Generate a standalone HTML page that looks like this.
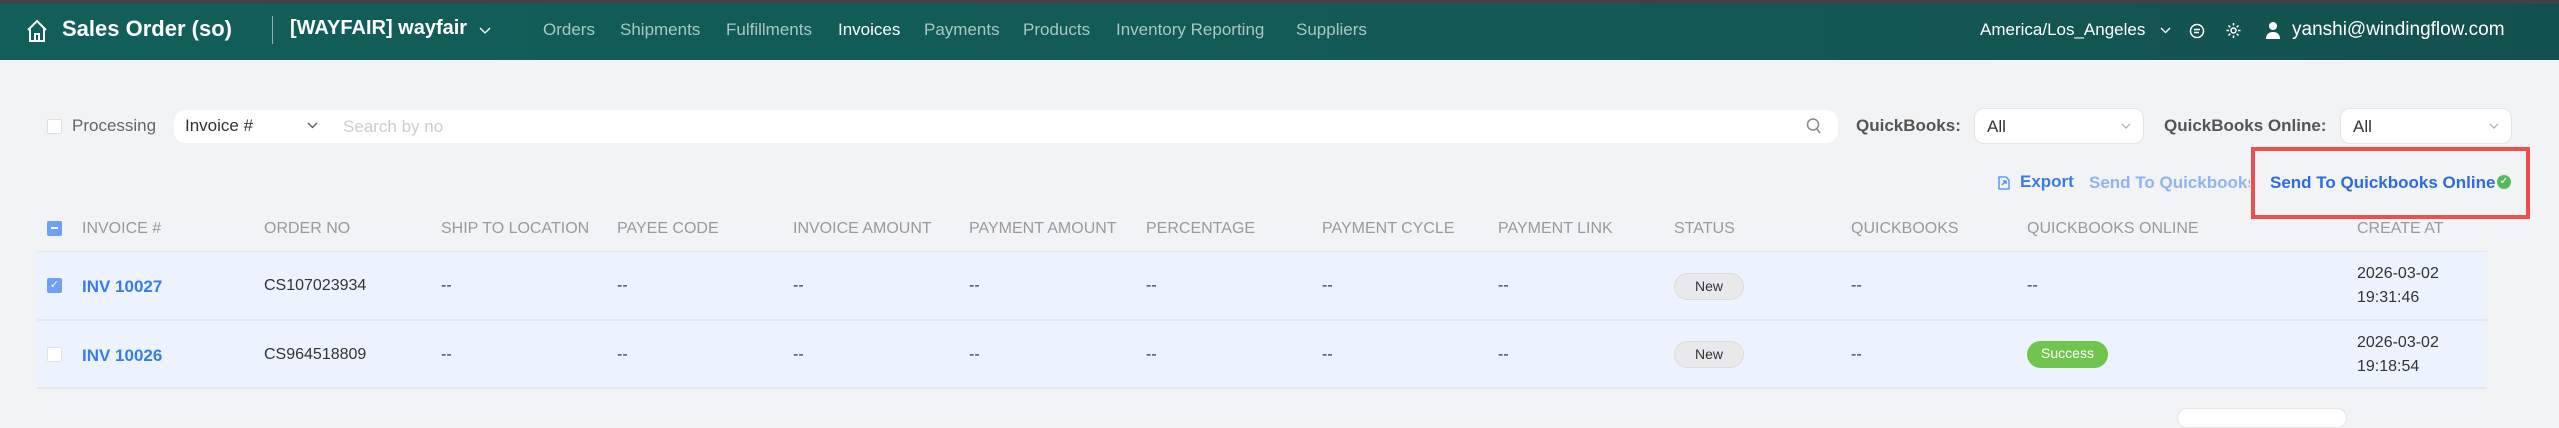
<!DOCTYPE html>
<html><head><meta charset="utf-8"><style>
*{margin:0;padding:0;box-sizing:border-box}
body{width:2559px;height:417px;overflow:hidden;background:#f2f3f5;font-family:"Liberation Sans",sans-serif;position:relative;color:#333}
.a{position:absolute;white-space:nowrap}
.top{position:absolute;left:0;top:0;width:2559px;height:4px;background:#3d4443}
.hd{position:absolute;left:0;top:4px;width:2559px;height:56px;background:linear-gradient(90deg,#125e58,#135a54 60%,#13514e)}
.nav{color:#a9c7c2;font-size:17px;top:20px}
.th{top:220px;font-size:16px;color:#9a9a9a}
.td{font-size:16px;color:#333}
.row{position:absolute;left:37px;width:2450px;background:#ecf3fe;border-bottom:2px solid #e3e7ee}
.pill{position:absolute;height:27px;border-radius:14px;font-size:14px;line-height:25px;text-align:center}
.sel{position:absolute;top:108px;height:36px;background:#fff;border:1px solid #e3e5ea;border-radius:10px;font-size:17px;padding:8px 12px}
.chev{position:absolute}
</style></head><body>
<div class="top"></div>
<div class="hd"></div>
<svg class="a" style="left:26px;top:19px" width="22" height="24" viewBox="0 0 22 24" fill="none" stroke="#fff" stroke-width="2"><path d="M2 11L11 2l9 9M4 9v13h14V9M9 22v-7h4v7"/></svg>
<div class="a" style="left:62px;top:16px;font-size:22px;font-weight:bold;color:#fff">Sales Order (so)</div>
<div class="a" style="left:272px;top:16px;width:1px;height:28px;background:#8fb3ad"></div>
<div class="a" style="left:290px;top:17px;font-size:20px;font-weight:bold;color:#fff">[WAYFAIR] wayfair</div>
<svg class="chev" style="left:479px;top:27px" width="12" height="8" viewBox="0 0 12 8" fill="none" stroke="#fff" stroke-width="1.3"><path d="M1 1l5 5 5-5"/></svg>
<div class="a nav" style="left:543px">Orders</div>
<div class="a nav" style="left:620px">Shipments</div>
<div class="a nav" style="left:726px">Fulfillments</div>
<div class="a nav" style="left:838px;color:#fff">Invoices</div>
<div class="a nav" style="left:924px">Payments</div>
<div class="a nav" style="left:1023px">Products</div>
<div class="a nav" style="left:1116px">Inventory Reporting</div>
<div class="a nav" style="left:1296px">Suppliers</div>
<div class="a" style="left:1980px;top:20px;font-size:17px;color:#fff">America/Los_Angeles</div>
<svg class="chev" style="left:2160px;top:27px" width="11" height="7" viewBox="0 0 11 7" fill="none" stroke="#fff" stroke-width="1.3"><path d="M1 1l4.5 4.5L10 1"/></svg>
<svg class="a" style="left:2189px;top:22px" width="16" height="18" viewBox="0 0 16 18" fill="none" stroke="#fff" stroke-width="1.5"><circle cx="8" cy="9" r="6.5"/><path d="M5 7.5h6M5 10.5h5"/></svg>
<svg class="a" style="left:2225px;top:21px" width="17" height="19" viewBox="0 0 17 19" fill="none" stroke="#fff" stroke-width="1.5"><circle cx="8.5" cy="9.5" r="2.5"/><path d="M8.5 2v2.5M8.5 14.5V17M1.5 9.5H4M13 9.5h2.5M3.5 4.5l1.8 1.8M11.7 12.7l1.8 1.8M3.5 14.5l1.8-1.8M11.7 6.3l1.8-1.8"/></svg>
<svg class="a" style="left:2265px;top:21px" width="16" height="19" viewBox="0 0 16 19" fill="#fff"><circle cx="8" cy="5" r="4"/><path d="M1 18c0-5 3-7 7-7s7 2 7 7z"/></svg>
<div class="a" style="left:2292px;top:19px;font-size:19px;color:#fff">yanshi@windingflow.com</div>

<div class="a" style="left:47px;top:119px;width:15px;height:15px;border:1px solid #dcdfe6;background:#fff;border-radius:2px"></div>
<div class="a" style="left:72px;top:116px;font-size:17px;color:#666">Processing</div>
<div class="a" style="left:174px;top:110px;width:1664px;height:33px;background:#fff;border-radius:12px"></div>
<div class="a" style="left:185px;top:116px;font-size:17px;color:#333">Invoice #</div>
<svg class="chev" style="left:307px;top:122px" width="11" height="7" viewBox="0 0 11 7" fill="none" stroke="#555" stroke-width="1.3"><path d="M1 1l4.5 4.5L10 1"/></svg>
<div class="a" style="left:343px;top:117px;font-size:17px;color:#ccc">Search by no</div>
<svg class="a" style="left:1806px;top:117px" width="16" height="18" viewBox="0 0 16 18" fill="none" stroke="#888" stroke-width="1.5"><circle cx="7" cy="7.5" r="5.5"/><path d="M11 12l3 4"/></svg>
<div class="a" style="left:1856px;top:116px;font-size:17px;font-weight:bold;color:#555">QuickBooks:</div>
<div class="sel" style="left:1974px;width:170px">All<svg style="position:absolute;right:12px;top:14px" width="10" height="6" viewBox="0 0 10 6" fill="none" stroke="#aaa" stroke-width="1.2"><path d="M1 1l4 4 4-4"/></svg></div>
<div class="a" style="left:2164px;top:116px;font-size:17px;font-weight:bold;color:#555">QuickBooks Online:</div>
<div class="sel" style="left:2340px;width:172px">All<svg style="position:absolute;right:12px;top:14px" width="10" height="6" viewBox="0 0 10 6" fill="none" stroke="#aaa" stroke-width="1.2"><path d="M1 1l4 4 4-4"/></svg></div>

<svg class="a" style="left:1997px;top:175px" width="14" height="16" viewBox="0 0 14 16" fill="none" stroke="#4a8af4" stroke-width="1.3"><path d="M2 2h7l3 3v9H2zM5 10l4-4M6 6h3v3"/></svg>
<div class="a" style="left:2020px;top:172px;font-size:17px;font-weight:bold;color:#3b7be8">Export</div>
<div class="a" style="left:2089px;top:173px;width:161px;overflow:hidden;font-size:17px;font-weight:bold;color:#8fb4f0">Send To Quickbooks</div>
<div class="a" style="left:2270px;top:173px;font-size:17px;font-weight:bold;color:#2c6be0">Send To Quickbooks Online</div>
<div class="a" style="left:2497px;top:175px;width:14px;height:14px;border-radius:50%;background:#5cb85c;color:#fff;font-size:10px;line-height:14px;text-align:center">&#10003;</div>
<div class="a" style="left:2251px;top:147px;width:279px;height:72px;border:4px solid #f04e4e"></div>

<div class="a" style="left:37px;top:251px;width:2450px;height:1px;background:#e3e7ee"></div>
<div class="a" style="left:47px;top:221px;width:15px;height:15px;background:#6ea0f5;border-radius:2px"><div style="margin:6px 4px;width:7px;height:2px;background:#fff"></div></div>
<div class="a th" style="left:82px">INVOICE #</div>
<div class="a th" style="left:264px">ORDER NO</div>
<div class="a th" style="left:441px">SHIP TO LOCATION</div>
<div class="a th" style="left:617px">PAYEE CODE</div>
<div class="a th" style="left:793px">INVOICE AMOUNT</div>
<div class="a th" style="left:969px">PAYMENT AMOUNT</div>
<div class="a th" style="left:1146px">PERCENTAGE</div>
<div class="a th" style="left:1322px">PAYMENT CYCLE</div>
<div class="a th" style="left:1498px">PAYMENT LINK</div>
<div class="a th" style="left:1674px">STATUS</div>
<div class="a th" style="left:1851px">QUICKBOOKS</div>
<div class="a th" style="left:2027px">QUICKBOOKS ONLINE</div>
<div class="a th" style="left:2357px">CREATE AT</div>

<div class="row" style="top:252px;height:69px"></div>
<div class="row" style="top:321px;height:68px"></div>

<div class="a" style="left:47px;top:278px;width:15px;height:15px;background:#6ea0f5;border-radius:2px;color:#fff;font-size:11px;line-height:15px;text-align:center">&#10003;</div>
<div class="a td" style="left:82px;top:277px;font-weight:bold;color:#3b7be8;font-size:17px">INV 10027</div>
<div class="a td" style="left:264px;top:277px">CS107023934</div>
<div class="a td" style="left:441px;top:277px">--</div><div class="a td" style="left:617px;top:277px">--</div><div class="a td" style="left:793px;top:277px">--</div><div class="a td" style="left:969px;top:277px">--</div><div class="a td" style="left:1146px;top:277px">--</div><div class="a td" style="left:1322px;top:277px">--</div><div class="a td" style="left:1498px;top:277px">--</div>
<div class="pill" style="left:1674px;top:273px;width:70px;background:#e9e9eb;border:1px solid #dcdcdc">New</div>
<div class="a td" style="left:1851px;top:277px">--</div><div class="a td" style="left:2027px;top:277px">--</div>
<div class="a td" style="left:2357px;top:265px">2026-03-02</div>
<div class="a td" style="left:2357px;top:289px">19:31:46</div>

<div class="a" style="left:47px;top:347px;width:15px;height:15px;background:#fff;border:1px solid #e0e3e8;border-radius:2px"></div>
<div class="a td" style="left:82px;top:346px;font-weight:bold;color:#3b7be8;font-size:17px">INV 10026</div>
<div class="a td" style="left:264px;top:346px">CS964518809</div>
<div class="a td" style="left:441px;top:346px">--</div><div class="a td" style="left:617px;top:346px">--</div><div class="a td" style="left:793px;top:346px">--</div><div class="a td" style="left:969px;top:346px">--</div><div class="a td" style="left:1146px;top:346px">--</div><div class="a td" style="left:1322px;top:346px">--</div><div class="a td" style="left:1498px;top:346px">--</div>
<div class="pill" style="left:1674px;top:341px;width:70px;background:#e9e9eb;border:1px solid #dcdcdc">New</div>
<div class="a td" style="left:1851px;top:346px">--</div>
<div class="pill" style="left:2027px;top:341px;width:81px;background:#71c44d;color:#fff">Success</div>
<div class="a td" style="left:2357px;top:334px">2026-03-02</div>
<div class="a td" style="left:2357px;top:358px">19:18:54</div>

<div class="a" style="left:2177px;top:408px;width:170px;height:20px;background:#fff;border:1px solid #e3e5ea;border-radius:10px"></div>
</body></html>
